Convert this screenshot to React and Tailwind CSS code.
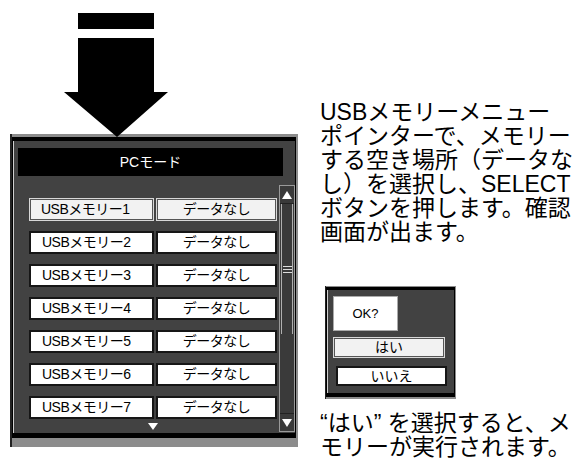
import React from "react";

const jp = { fontFamily: '"Liberation Sans", "Noto Sans CJK JP", sans-serif' };

function Arrow() {
  return (
    <svg width="300" height="137" viewBox="0 0 300 137" className="relative z-10 block">
      <rect x="78" y="13" width="76" height="16" fill="#000" />
      <polygon points="78,38 154,38 154,92 168,92 117,137 64,92 78,92" fill="#000" />
    </svg>
  );
}

function Row({ n, selected }) {
  const cell = selected
    ? "bg-[#f2f2f2] border border-[#d8d8d8] shadow-[inset_0_0_0_1px_#555]"
    : "bg-white border-2 border-[#161616]";
  return (
    <div className="flex gap-[2px] h-[23px]">
      <div className={`w-[125px] h-full flex items-center pl-[11px] text-[14px] tracking-[-0.5px] text-black ${cell}`}>
        USBメモリー{n}
      </div>
      <div className={`w-[121px] h-full flex items-center justify-center text-[14px] tracking-[-0.5px] text-black ${cell}`}>
        データなし
      </div>
    </div>
  );
}

function Scrollbar() {
  return (
    <div className="w-[16px] h-[247px] flex flex-col bg-[#3a3a3a] border border-[#9a9a9a]">
      <div className="h-[18px] flex items-center justify-center border-b border-[#222]">
        <svg width="10" height="8" viewBox="0 0 10 8">
          <polygon points="5,0 10,8 0,8" fill="#fff" />
        </svg>
      </div>
      <div className="h-[130px] border-x border-[#b0b0b0] mx-[1px] flex items-center justify-center">
        <div className="flex flex-col gap-[2px] w-[9px]">
          <div className="h-[1px] bg-[#ddd]" />
          <div className="h-[1px] bg-[#ddd]" />
          <div className="h-[1px] bg-[#ddd]" />
        </div>
      </div>
      <div className="flex-1" />
      <div className="h-[18px] flex items-center justify-center border-t border-[#222]">
        <svg width="10" height="8" viewBox="0 0 10 8">
          <polygon points="0,0 10,0 5,8" fill="#fff" />
        </svg>
      </div>
    </div>
  );
}

export default function App() {
  return (
    <div className="w-[574px] h-[463px] bg-white flex overflow-hidden" style={jp}>
      {/* left: arrow + menu */}
      <div className="w-[300px] flex flex-col">
        <Arrow />
        <div className="ml-[10px] -mt-[3px] w-[288px] h-[313px] bg-[#8c8c8c] border-l-2 border-[#222] pt-[3px] pr-[2px] pb-[9px]">
          <div className="h-full bg-[#424242] border-t-4 border-b-[5px] border-x border-black shadow-[inset_1px_0_0_#cfcfcf] flex flex-col">
            <div className="ml-[5px] mt-[7px] w-[265px] h-[28px] bg-black flex items-center justify-center text-white text-[14px]">
              PCモード
            </div>
            <div className="mt-[9px] flex">
              <div className="w-[266px] pl-[16px] pt-[13px] flex flex-col">
                <div className="flex flex-col gap-[10px]">
                  {[1, 2, 3, 4, 5, 6, 7].map((n) => (
                    <Row key={n} n={n} selected={n === 1} />
                  ))}
                </div>
                <div className="mt-[4px] w-[248px] flex justify-center">
                  <svg width="10" height="7" viewBox="0 0 10 7">
                    <polygon points="0,0 10,0 5,7" fill="#fff" />
                  </svg>
                </div>
              </div>
              <Scrollbar />
            </div>
          </div>
        </div>
      </div>

      {/* right: description */}
      <div className="pl-[20px] pt-[100px] flex flex-col text-black">
        <p className="text-[23px] leading-[24px] whitespace-nowrap">
          USBメモリーメニュー
          <br />
          ポインターで、メモリー
          <br />
          する空き場所（データな
          <br />
          し）を選択し、SELECT
          <br />
          ボタンを押します。確認
          <br />
          画面が出ます。
        </p>

        <div className="ml-[5px] mt-[42px] w-[131px] h-[113px] bg-[#8c8c8c] border-l border-[#222] pt-[1px] pr-[1px] pb-[2px]">
          <div className="h-full bg-[#424242] border-t-[3px] border-b-[4px] border-x border-black shadow-[inset_1px_0_0_#cfcfcf] pl-[6px] pt-[6px] flex flex-col">
            <div className="w-[65px] h-[35px] bg-white border border-[#aaa] flex items-center justify-center text-[13px]">
              OK?
            </div>
            <div className="mt-[6px] w-[112px] h-[21px] bg-[#f2f2f2] border border-[#d8d8d8] shadow-[inset_0_0_0_1px_#555] flex items-center justify-center text-[14px]">
              はい
            </div>
            <div className="mt-[8px] ml-[3px] w-[111px] h-[20px] bg-white border-2 border-[#161616] flex items-center justify-center text-[14px]">
              いいえ
            </div>
          </div>
        </div>

        <p className="mt-[12px] text-[23px] leading-[24px] whitespace-nowrap">
          “はい” を選択すると、メ
          <br />
          モリーが実行されます。
        </p>
      </div>
    </div>
  );
}
